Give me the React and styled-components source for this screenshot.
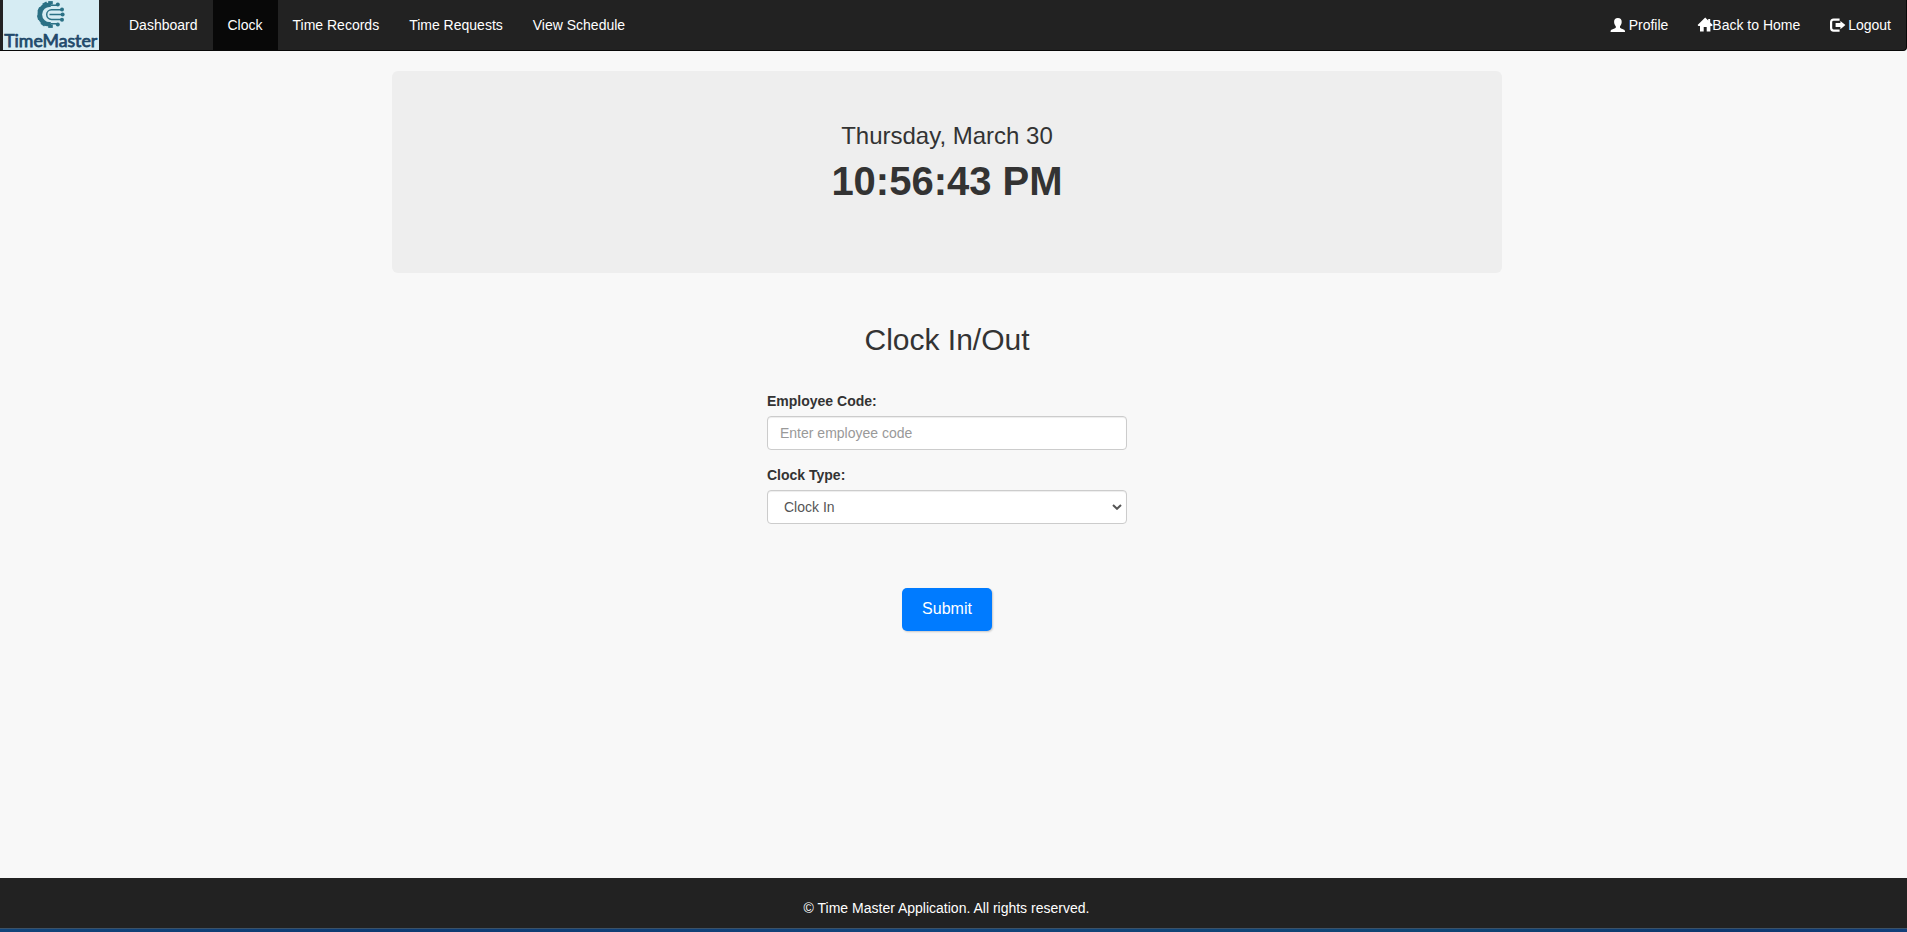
import React from "react";
import styled, { createGlobalStyle } from "styled-components";

const Global = createGlobalStyle`
  *, *::before, *::after { box-sizing: border-box; }
  html, body { margin: 0; padding: 0; }
  body {
    background: #f8f8f8;
    color: #333;
    font: 14px/20px "Liberation Sans", Arial, sans-serif;
    overflow: hidden;
  }
`;

const Page = styled.div`
  display: flex;
  flex-direction: column;
  height: 932px;
`;

const Navbar = styled.nav`
  display: flex;
  flex: none;
  height: 51px;
  padding-left: 3px;
  background: #222;
  border: solid #080808;
  border-width: 0 1px 1px 0;
  border-radius: 0 0 4px 0;
`;

const Brand = styled.a`
  display: block;
  width: 96px;
  height: 50px;
  margin-right: 15px;
  background: #d6ecf3;
`;

const NavLink = styled.a`
  display: flex;
  align-items: center;
  height: 50px;
  padding: 0 15px;
  color: #fff;
  white-space: pre;
  background: ${(p) => (p.$active ? "#080808" : "transparent")};
`;

const NavRight = styled.div`
  display: flex;
  margin-left: auto;
`;

const Glyph = styled.svg`
  width: 14px;
  height: 14px;
  flex: none;
  fill: #fff;
  overflow: visible;
`;

const Main = styled.main`
  display: flex;
  flex: 1;
  flex-direction: column;
  align-items: center;
  width: 1894px;
  padding-top: 20px;
`;

const ClockPanel = styled.section`
  width: 1110px;
  height: 202px;
  padding-top: 52px;
  text-align: center;
  background: #eee;
  border-radius: 6px;
`;

const DateLine = styled.h3`
  margin: 0;
  font-size: 24px;
  font-weight: 500;
  line-height: 26px;
`;

const TimeLine = styled.h1`
  margin: 10px 0 0;
  font-size: 40px;
  font-weight: 700;
  line-height: 44px;
`;

const Title = styled.h2`
  margin: 50px 0 35px;
  font-size: 30px;
  font-weight: 500;
  line-height: 33px;
`;

const Form = styled.form`
  display: flex;
  flex-direction: column;
  width: 360px;
`;

const Field = styled.div`
  display: flex;
  flex-direction: column;
  margin-bottom: 15px;
`;

const Label = styled.label`
  margin-bottom: 5px;
  font-weight: 700;
`;

const controlStyle = `
  width: 100%;
  height: 34px;
  padding: 6px 12px;
  color: #555;
  font: inherit;
  background-color: #fff;
  border: 1px solid #ccc;
  border-radius: 4px;
  box-shadow: inset 0 1px 1px rgba(0, 0, 0, 0.075);
`;

const Input = styled.input`
  ${controlStyle}
  &::placeholder { color: #999; opacity: 1; }
`;

const SelectBox = styled.div`
  display: grid;
  align-items: center;
  justify-items: end;

  & > * { grid-area: 1 / 1; }
`;

const Select = styled.select`
  ${controlStyle}
  appearance: none;
  padding-left: 16px;
`;

const Chevron = styled.svg`
  width: 10px;
  height: 6px;
  margin-right: 5px;
  fill: none;
  stroke: #555;
  stroke-width: 2;
  pointer-events: none;
`;

const SubmitButton = styled.button`
  align-self: center;
  width: 90px;
  height: 43px;
  margin-top: 49px;
  padding: 0 0 3px;
  color: #fff;
  font: 16px/23px "Liberation Sans", Arial, sans-serif;
  background: #007bff;
  border: 0;
  border-radius: 5px;
  box-shadow: 1px 1px 2px rgba(0, 0, 0, 0.2);
`;

const Footer = styled.footer`
  flex: none;
  height: 50px;
  padding-top: 20px;
  color: #fff;
  background: #222;
`;

const Copyright = styled.p`
  width: 1893px;
  margin: 0;
  text-align: center;
`;

const BottomStrip = styled.div`
  flex: none;
  height: 4px;
  background: linear-gradient(90deg, #11457a, #0d3b72 20%, #12447a 45%, #0f4674 75%, #0d386e 90%, #123f7a);
  border-top: 1px solid #3b5269;
`;

const TEETH = [90, 128, 166, 204, 242, 270];

function Logo() {
  return (
    <svg width="96" height="50" viewBox="0 0 96 50" role="img" aria-label="TimeMaster">
      <g fill="none" stroke="#2b7185">
        <path d="M48 4.8A9.8 9.8 0 1 0 48 24.2" strokeWidth="4.6" />
        {TEETH.map((a) => (
          <path
            key={a}
            d="M10 0H13.4"
            strokeWidth="4.6"
            transform={`translate(47.5 14.5) rotate(${a})`}
          />
        ))}
        <path
          d="M48 5.3H53L56 4.5M58 9.8H48.5A4.8 4.8 0 0 0 48.5 19.4H58M46.5 14.6H59M48 23.8H53L56 24.6"
          strokeWidth="1.5"
        />
      </g>
      <g fill="#2b7185">
        <circle cx="54.8" cy="4.5" r="2" />
        <circle cx="59" cy="9.4" r="2" />
        <circle cx="59.6" cy="14.6" r="2" />
        <circle cx="59" cy="19.8" r="2" />
        <circle cx="54.8" cy="24.6" r="2" />
      </g>
      <text
        x="1.2"
        y="46.5"
        textLength="93"
        lengthAdjust="spacingAndGlyphs"
        fill="#21496a"
        stroke="#21496a"
        strokeWidth="0.75"
        fontFamily="Lato, sans-serif"
        fontSize="17.2"
        fontWeight="400"
      >
        TimeMaster
      </text>
    </svg>
  );
}

function UserGlyph() {
  return (
    <Glyph viewBox="0 0 14 14">
      <path d="M6.9 0C9.4 0 10.8 1.5 10.7 4C10.6 6 9.8 7.4 9 8.3V9.4C9.2 10.6 14 11 14 13V14H-.4V13C-.4 11 4.6 10.6 4.8 9.4V8.3C4 7.4 3.2 6 3.1 4C3 1.5 4.4 0 6.9 0Z" />
    </Glyph>
  );
}

function HomeGlyph() {
  return (
    <Glyph viewBox="0 0 14 14">
      <path d="M7.2 -.4L10.2 2.4V1H12.2V4.4L14.8 7.1L14 8H12.4V13.6H8.7V9H5.7V13.6H2V8H.4L-.4 7.1Z" />
    </Glyph>
  );
}

function LogoutGlyph() {
  return (
    <Glyph viewBox="0 0 14 14">
      <path
        d="M9.6 1.6H3.6Q1.1 1.6 1.1 4.1V10.1Q1.1 12.6 3.6 12.6H9.6"
        fill="none"
        stroke="#fff"
        strokeWidth="2.2"
      />
      <path d="M10.4 2.9L15.4 7.1L10.4 11.3V9.1H5.6V5.1H10.4Z" />
    </Glyph>
  );
}

export default function App() {
  return (
    <Page>
      <Global />
      <Navbar>
        <Brand><Logo /></Brand>
        <NavLink>Dashboard</NavLink>
        <NavLink $active>Clock</NavLink>
        <NavLink>Time Records</NavLink>
        <NavLink>Time Requests</NavLink>
        <NavLink>View Schedule</NavLink>
        <NavRight>
          <NavLink><UserGlyph /> Profile</NavLink>
          <NavLink><HomeGlyph />Back to Home</NavLink>
          <NavLink><LogoutGlyph /> Logout</NavLink>
        </NavRight>
      </Navbar>
      <Main>
        <ClockPanel>
          <DateLine>Thursday, March 30</DateLine>
          <TimeLine>10:56:43 PM</TimeLine>
        </ClockPanel>
        <Title>Clock In/Out</Title>
        <Form>
          <Field>
            <Label htmlFor="code">Employee Code:</Label>
            <Input id="code" placeholder="Enter employee code" />
          </Field>
          <Field>
            <Label htmlFor="type">Clock Type:</Label>
            <SelectBox>
              <Select id="type" defaultValue="in">
                <option value="in">Clock In</option>
                <option value="out">Clock Out</option>
              </Select>
              <Chevron viewBox="0 0 10 6"><path d="M1 1L5 4.8L9 1" /></Chevron>
            </SelectBox>
          </Field>
          <SubmitButton type="button">Submit</SubmitButton>
        </Form>
      </Main>
      <Footer>
        <Copyright>© Time Master Application. All rights reserved.</Copyright>
      </Footer>
      <BottomStrip />
    </Page>
  );
}
